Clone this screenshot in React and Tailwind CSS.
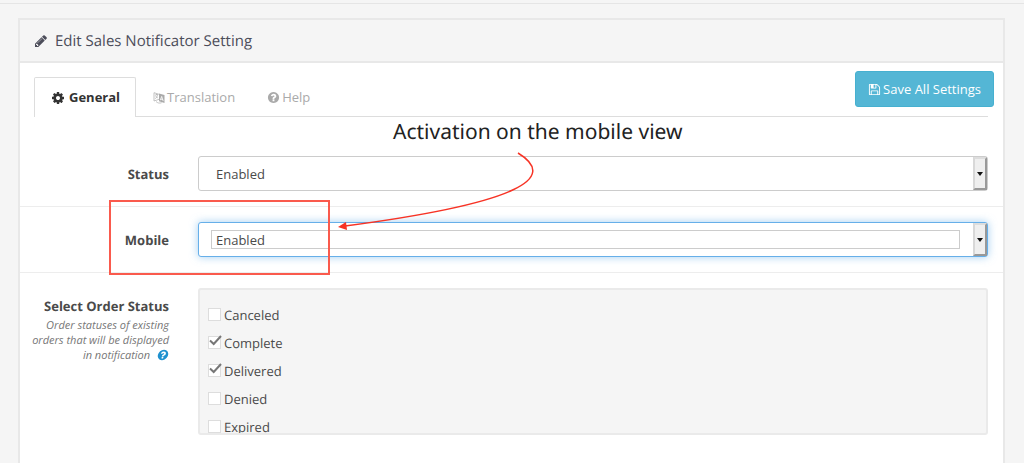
import { useState } from 'react'

const ICONS = {
  pencil:
    'M491 1536l91-91-235-235-91 91v107h128v128h107zm523-928q0-22-22-22-10 0-17 7l-542 542q-7 7-7 17 0 22 22 22 10 0 17-7l542-542q7-7 7-17zm-54-192l416 416-832 832h-416v-416zm683 96q0 53-37 90l-166 166-416-416 166-165q36-38 90-38 53 0 91 38l235 234q37 39 37 91z',
  cog: 'M1152 896q0-106-75-181t-181-75-181 75-75 181 75 181 181 75 181-75 75-181zm512-109v222q0 12-8 23t-20 13l-185 28q-19 54-39 91 35 50 107 138 10 12 10 25t-9 23q-27 37-99 108t-94 71q-12 0-26-9l-138-108q-44 23-91 38-16 136-29 186-7 28-36 28h-222q-14 0-24.500-8.500t-11.500-21.500l-28-184q-49-16-90-37l-141 107q-10 9-25 9-14 0-25-11-126-114-165-168-7-10-7-23 0-12 8-23 15-21 51-66.500t54-70.500q-27-50-41-99l-183-27q-13-2-21-12.500t-8-23.500v-222q0-12 8-23t19-13l186-28q14-46 39-92-40-57-107-138-10-12-10-24 0-10 9-23 26-36 98.500-107.500t94.500-71.500q13 0 26 10l138 107q44-23 91-38 16-136 29-186 7-28 36-28h222q14 0 24.500 8.500t11.500 21.500l28 184q49 16 90 37l142-107q9-9 24-9 13 0 25 10 129 119 165 170 7 8 7 22 0 12-8 23-15 21-51 66.500t-54 70.500q26 50 41 98l183 28q13 2 21 12.500t8 23.500z',
  question:
    'M1024 1376v-192q0-14-9-23t-23-9h-192q-14 0-23 9t-9 23v192q0 14 9 23t23 9h192q14 0 23-9t9-23zm256-672q0-88-55.500-163t-138.500-116-170-41q-243 0-371 213-15 24 8 42l132 100q7 6 19 6 16 0 25-12 53-68 86-92 34-24 86-24 48 0 85.500 26t37.500 59q0 38-20 61t-68 45q-63 28-115.500 86.500t-52.500 125.500v36q0 14 9 23t23 9h192q14 0 23-9t9-23q0-19 21.500-49.500t54.500-49.500q32-18 49-28.500t46-35 44.500-48 28-60.500 12.500-81zm384 192q0 209-103 385.500t-279.500 279.500-385.500 103-385.500-103-279.500-279.500-103-385.500 103-385.500 279.500-279.500 385.500-103 385.500 103 279.500 279.500 103 385.500z',
  save: 'M512 1536h768v-384h-768v384zm896 0h128v-896q0-14-10-38.500t-20-34.500l-281-281q-10-10-34-20t-39-10v416q0 40-28 68t-68 28h-576q-40 0-68-28t-28-68v-416h-128v1280h128v-416q0-40 28-68t68-28h832q40 0 68 28t28 68v416zm-384-928v-320q0-13-9.500-22.500t-22.500-9.500h-192q-13 0-22.500 9.500t-9.500 22.500v320q0 13 9.500 22.500t22.500 9.500h192q13 0 22.500-9.500t9.500-22.500zm640 32v928q0 40-28 68t-68 28h-1344q-40 0-68-28t-28-68v-1344q0-40 28-68t68-28h928q40 0 88 20t76 48l280 280q28 28 48 76t20 88z',
}

function Icon({ name, className }) {
  return (
    <svg className={className} viewBox="0 0 1792 1792" fill="currentColor" aria-hidden="true">
      <path d={ICONS[name]} />
    </svg>
  )
}

function LanguageIcon() {
  return (
    <svg className="h-3 w-3 shrink-0" viewBox="0 0 12 12" fill="none" stroke="currentColor" aria-hidden="true">
      <path d="M6 2.300L1 .7V9l5-1.700" strokeWidth=".7" />
      <path d="M2 3.200l3-.8M3.500 2v1M4.600 3.200C4 5 3.200 6 2.100 6.700M2.500 4.300l2.300 1.600" strokeWidth=".7" />
      <path d="M6 1.500l5.500 1.500v8L6 9.200z" fill="currentColor" stroke="none" />
      <path d="M7.300 8.200l1.400-3.800 1.500 4.600M7.800 7.100l2 .5" stroke="white" strokeWidth=".8" />
      <path d="M3 9.500c1.500 1.600 3.600 2 5.700 1.200" strokeWidth=".7" />
    </svg>
  )
}

const tabs = [
  { id: 'general', label: 'General', icon: <Icon name="cog" className="mr-1 h-[14px] w-[14px]" /> },
  { id: 'translation', label: 'Translation', icon: <LanguageIcon /> },
  { id: 'help', label: 'Help', icon: <Icon name="question" className="h-[13px] w-[13px]" /> },
]

const orderStatuses = ['Canceled', 'Complete', 'Delivered', 'Denied', 'Expired']

function SelectField({ id, label, focused }) {
  return (
    <div className="grid grid-cols-[149px_1fr] items-center gap-x-[29px] border-b border-[#ededed] py-[15px] pr-[15px]">
      <label htmlFor={id} className="pt-[2px] text-right text-[13px] font-bold">
        {label}
      </label>
      <div className="relative grid">
        <select
          id={id}
          className={
            focused
              ? 'h-[35px] w-full appearance-none rounded-[3px] border border-[#66afe9] bg-white pt-[2px] pl-[17px] text-[13px] shadow-[0_0_8px_rgba(102,175,233,0.6)] outline-none'
              : 'h-[35px] w-full appearance-none rounded-[3px] border border-[#ccc] bg-white pt-[2px] pl-[17px] text-[13px] outline-none'
          }
        >
          <option>Enabled</option>
          <option>Disabled</option>
        </select>
        {focused && (
          <span className="pointer-events-none absolute top-2 right-7 bottom-2 left-[13px] border border-[#ccc]" />
        )}
        <span className="pointer-events-none absolute top-px right-px bottom-px flex w-[14px] items-center justify-center border-2 border-t-[#ddd] border-r-[#999] border-b-[#999] border-l-[#d8d8d8] bg-[#efefef]">
          <svg className="h-1 w-[6px]" viewBox="0 0 6 4" aria-hidden="true">
            <path d="M0 0h6L3 4z" fill="#111" />
          </svg>
        </span>
      </div>
    </div>
  )
}

// Callout drawn over the form: caption, curved arrow and the box around the Mobile row
function MobileCallout() {
  return (
    <div className="pointer-events-none absolute top-[98px] left-[89px] text-[#222]">
      <p className="ml-[284px] font-['Noto_Sans',sans-serif] text-[21px] leading-7 whitespace-nowrap">
        Activation on the mobile view
      </p>
      <svg className="absolute top-[34px] left-[228px] h-[80px] w-[200px]" viewBox="0 0 200 80" aria-hidden="true">
        <path d="M181 1C222 26 182 51 8 74" fill="none" stroke="#f73325" strokeWidth="1.5" />
        <path d="M1 75l8-5 1 8z" fill="#f73325" />
      </svg>
      <div className="mt-[54px] h-[75px] w-[221px] border-2 border-[#fa5a4d]" />
    </div>
  )
}

export default function App() {
  const [tab, setTab] = useState('general')
  const [checked, setChecked] = useState(['Complete', 'Delivered'])

  const toggle = (name) => {
    setChecked(checked.includes(name) ? checked.filter((n) => n !== name) : [...checked, name])
  }

  return (
    <div className="h-screen overflow-hidden bg-[#f5f5f5] pr-[19px] pl-[18px] font-['Open_Sans',sans-serif] text-[13px] text-[#4a4a4a] [text-rendering:geometricPrecision]">
      <div className="-mr-[19px] -ml-[18px] h-1 border-b border-[#e5e5e5]" />

      <main className="relative mt-[14px] min-h-screen border-2 border-[#e8e8e8] bg-white">
        {/* HEADER */}
        <header className="flex h-[43px] items-center border-b-2 border-[#e8e8e8] bg-[#f5f5f5] pl-[14px] text-[#4c4d5a]">
          <Icon name="pencil" className="mr-[7px] h-[14px] w-[14px]" />
          <h1 className="pt-px text-[15px]">Edit Sales Notificator Setting</h1>
        </header>

        {/* TABS */}
        <div className="mr-[15px] ml-[14px] flex h-[54px] items-end justify-between border-b border-[#ddd]">
          <div role="tablist" className="-mb-px flex">
            {tabs.map((t) => (
              <button
                key={t.id}
                role="tab"
                aria-selected={tab === t.id}
                onClick={() => setTab(t.id)}
                className={
                  tab === t.id
                    ? 'flex h-10 items-center rounded-t-[2px] border border-b-0 border-[#ddd] bg-white pr-[15px] pl-4 text-[13px] font-bold text-[#333]'
                    : 'flex h-10 items-center gap-[2px] pt-px pr-[15px] pl-[17px] text-[13px] text-[#aaa]'
                }
              >
                {t.icon}
                {t.label}
              </button>
            ))}
          </div>
          <button className="-mr-[6px] mb-[9px] flex h-9 items-center gap-[2px] rounded-[3px] border border-[#46b0d0] bg-[#54b6d5] px-3 pt-px text-[13px] text-white">
            <Icon name="save" className="h-[13px] w-[13px]" />
            Save All Settings
          </button>
        </div>

        {/* FORM */}
        <div className="mt-6">
          <SelectField id="status" label="Status" />
          <SelectField id="mobile" label="Mobile" focused />

          <div className="grid grid-cols-[149px_1fr] gap-x-[29px] py-[15px] pr-[15px]">
            <div className="pt-2 text-right">
              <div id="order-status" className="leading-5 font-bold">
                Select Order Status
              </div>
              <p className="mt-[2px] ml-3 text-[11px] leading-[15px] text-[#777] italic">
                Order statuses of existing orders that will be displayed in notification{' '}
                <Icon name="question" className="ml-1 inline h-3 w-3 -skew-x-12 align-[-2px] text-[#1e91cf]" />
              </p>
            </div>
            <div
              role="group"
              aria-labelledby="order-status"
              className="h-[147px] overflow-hidden rounded-[3px] border-2 border-[#eaeaea] bg-[#f5f5f5] px-2 pt-3"
            >
              {orderStatuses.map((name) => (
                <label key={name} className="flex h-7 items-center gap-[3px]">
                  <span className="relative -mt-1 grid h-[13px] w-[13px]">
                    <input
                      type="checkbox"
                      checked={checked.includes(name)}
                      onChange={() => toggle(name)}
                      className="h-[13px] w-[13px] appearance-none border border-[#ddd] bg-white"
                    />
                    {checked.includes(name) && (
                      <svg className="pointer-events-none absolute -top-px left-px h-3 w-[13px]" viewBox="0 0 13 12" aria-hidden="true">
                        <path d="M1 5.500L4.700 9 12 1" fill="none" stroke="#777" strokeWidth="2" />
                      </svg>
                    )}
                  </span>
                  {name}
                </label>
              ))}
            </div>
          </div>
        </div>

        <MobileCallout />
      </main>
    </div>
  )
}
